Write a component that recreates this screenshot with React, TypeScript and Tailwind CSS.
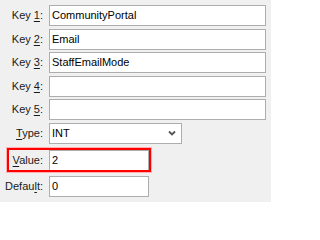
import React from "react";

function Label({ pre, u, post }: { pre: string; u: string; post: string }) {
  return (
    <div className="w-[44px] shrink-0 pr-[1px] text-right text-[11px] leading-none text-[#1a1a1a]">
      {pre}
      <span className="underline underline-offset-[1.5px]">{u}</span>
      {post}
    </div>
  );
}

function TextBox({ value, w }: { value: string; w: string }) {
  return (
    <div
      className={`${w} h-full border border-[#adadad] bg-white pl-[2px] flex items-center text-[11px] leading-none text-black`}
    >
      {value}
    </div>
  );
}

export default function App() {
  const keys = [
    { n: "1", v: "CommunityPortal" },
    { n: "2", v: "Email" },
    { n: "3", v: "StaffEmailMode" },
    { n: "4", v: "" },
    { n: "5", v: "" },
  ];
  return (
    <div
      className="w-[271px] h-[202px] bg-[#f0f0f0] pt-[5px] flex flex-col gap-[2.5px] overflow-hidden"
      style={{ fontFamily: '"Liberation Sans", Arial, sans-serif' }}
    >
      {keys.map((k) => (
        <div key={k.n} className="h-[21px] flex items-center gap-[5px]">
          <Label pre="Key " u={k.n} post=":" />
          <div className="h-full">
            <TextBox value={k.v} w="w-[217px]" />
          </div>
        </div>
      ))}
      <div className="h-[21px] flex items-center gap-[5px]">
        <Label pre="" u="T" post="ype:" />
        <div className="h-full w-[133px] border border-[#adadad] bg-white pl-[2px] flex items-center justify-between text-[11px] leading-none text-black">
          <span>INT</span>
          <svg width="8" height="6" viewBox="0 0 8 6" className="mr-[5px]">
            <path d="M1 1.5 L4 4.5 L7 1.5" fill="none" stroke="#555" strokeWidth="1.8" />
          </svg>
        </div>
      </div>
      <div className="relative mt-[3.5px] h-[21px] flex items-center gap-[5px]">
        <Label pre="" u="V" post="alue:" />
        <div className="h-full">
          <TextBox value="2" w="w-[100px]" />
        </div>
        <div className="absolute left-[7px] top-[-1.5px] w-[144px] h-[24px] border-2 border-[#ff0000] shadow-[0_0_0_1px_#ffb0b0]" />
      </div>
      <div className="mt-[3px] h-[21px] flex items-center gap-[5px]">
        <Label pre="Defau" u="l" post="t:" />
        <div className="h-full">
          <TextBox value="0" w="w-[100px]" />
        </div>
      </div>
    </div>
  );
}
